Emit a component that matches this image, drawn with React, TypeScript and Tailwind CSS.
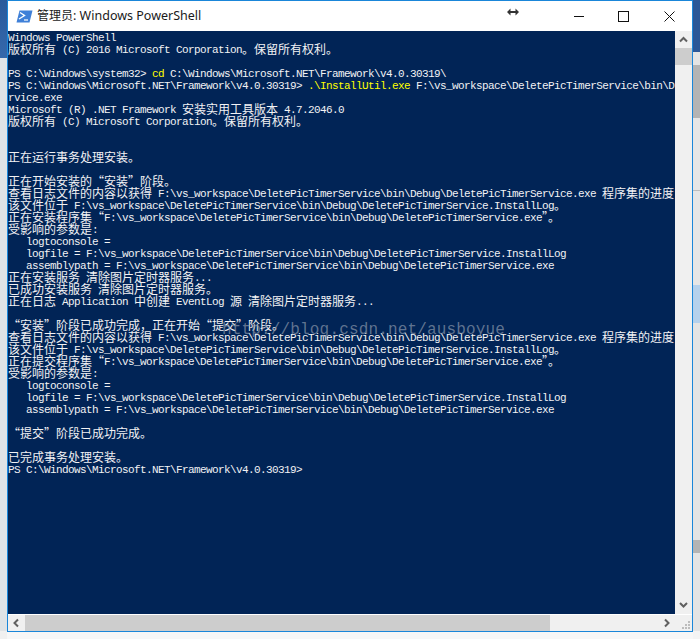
import React from "react";

const W = "F:\\vs_workspace\\DeletePicTimerService\\bin\\Debug\\DeletePicTimerService";
const FW = "PS C:\\Windows\\Microsoft.NET\\Framework\\v4.0.30319>";

const lines: string[] = [
  "Windows PowerShell",
  "版权所有 (C) 2016 Microsoft Corporation。保留所有权利。",
  "",
  "PS C:\\Windows\\system32> {cd} C:\\Windows\\Microsoft.NET\\Framework\\v4.0.30319\\",
  FW + " {.\\InstallUtil.exe} F:\\vs_workspace\\DeletePicTimerService\\bin\\D",
  "rvice.exe",
  "Microsoft (R) .NET Framework 安装实用工具版本 4.7.2046.0",
  "版权所有 (C) Microsoft Corporation。保留所有权利。",
  "",
  "",
  "正在运行事务处理安装。",
  "",
  "正在开始安装的“安装”阶段。",
  "查看日志文件的内容以获得 " + W + ".exe 程序集的进度",
  "该文件位于 " + W + ".InstallLog。",
  "正在安装程序集“" + W + ".exe”。",
  "受影响的参数是:",
  "   logtoconsole = ",
  "   logfile = " + W + ".InstallLog",
  "   assemblypath = " + W + ".exe",
  "正在安装服务 清除图片定时器服务...",
  "已成功安装服务 清除图片定时器服务。",
  "正在日志 Application 中创建 EventLog 源 清除图片定时器服务...",
  "",
  "“安装”阶段已成功完成，正在开始“提交”阶段。",
  "查看日志文件的内容以获得 " + W + ".exe 程序集的进度",
  "该文件位于 " + W + ".InstallLog。",
  "正在提交程序集“" + W + ".exe”。",
  "受影响的参数是:",
  "   logtoconsole = ",
  "   logfile = " + W + ".InstallLog",
  "   assemblypath = " + W + ".exe",
  "",
  "“提交”阶段已成功完成。",
  "",
  "已完成事务处理安装。",
  FW,
];

const LATIN = "font-['Liberation_Mono',monospace] text-[11px] tracking-[-0.6px] align-[1px]";

function Runs({ text, yellow }: { text: string; yellow?: boolean }) {
  const parts = text.split(/([\u3000-\u303f\u4e00-\u9fff\u201c\u201d\uff00-\uffef]+)/).filter(Boolean);
  return (
    <>
      {parts.map((p, i) =>
        /^[\u3000-\u303f\u4e00-\u9fff\u201c\u201d\uff00-\uffef]/.test(p) ? (
          <span key={i}>{p}</span>
        ) : (
          <span key={i} className={yellow ? LATIN + " text-[#ffff00]" : LATIN}>
            {p}
          </span>
        ),
      )}
    </>
  );
}

function Line({ text }: { text: string }) {
  const parts = text.split(/(\{[^}]*\})/).filter(Boolean);
  return (
    <div className="h-3 whitespace-pre font-['Noto_Sans_CJK_SC',sans-serif] text-[12px] leading-3">
      {parts.map((p, i) =>
        p.startsWith("{") ? <Runs key={i} text={p.slice(1, -1)} yellow /> : <Runs key={i} text={p} />,
      )}
    </div>
  );
}

function Chevron({ d }: { d: string }) {
  return (
    <svg width="17" height="17" viewBox="0 0 17 17" className="block">
      <path d={d} fill="none" stroke="#606060" strokeWidth="2" />
    </svg>
  );
}

export default function App() {
  return (
    <div className="flex h-[639px] w-[700px] overflow-hidden bg-[#f7f7f7]">
      {/* backdrop, left */}
      <div className="flex w-[7px] flex-col">
        <div className="h-[58px] bg-gradient-to-b from-[#2a5a9c] to-[#3568ab]" />
        <div className="h-[573px] bg-[#dfe3e6]" />
        <div className="flex-1 bg-[#f0f0f0]" />
      </div>

      {/* window */}
      <div className="flex h-[632px] w-[686px] flex-col border border-[#1a86d9] bg-[#f0f0f0]">
        <div className="flex h-[30px] items-center bg-white">
          <svg width="17" height="13" viewBox="0 0 17 13" className="ml-2 mt-[1px] shrink-0">
            <path d="M3.5 0.5H16.5L13.5 12.5H0.5Z" fill="#3f80d8" />
            <path d="M4 2.5L8.5 5.5L3 9" fill="none" stroke="#fff" strokeWidth="1.4" />
            <path d="M8 10H12" stroke="#fff" strokeWidth="1.2" />
          </svg>
          <div className="ml-[4px] w-[165px] shrink-0 whitespace-pre font-['Noto_Sans','Noto_Sans_CJK_SC',sans-serif] text-[12.5px] text-[#1a1a1a]">
            <span className="font-['Noto_Sans_CJK_SC',sans-serif] text-[12px]">管理员</span>: Windows PowerShell
          </div>
          <svg width="12" height="8" viewBox="0 0 12 8" className="ml-[305px] mb-[8px] shrink-0">
            <path d="M0 4L3.5 0.5V7.5ZM12 4L8.5 0.5V7.5Z" fill="#333" />
            <path d="M3 3H9V5H3Z" fill="#333" />
          </svg>
          <svg width="10" height="10" viewBox="0 0 10 10" className="ml-[55px] shrink-0">
            <path d="M0 5.5H10" stroke="#111" strokeWidth="1" />
          </svg>
          <svg width="11" height="11" viewBox="0 0 11 11" className="ml-[34px] shrink-0">
            <rect x="0.5" y="0.5" width="10" height="10" fill="none" stroke="#111" strokeWidth="1" />
          </svg>
          <svg width="11" height="11" viewBox="0 0 11 11" className="ml-[35px] shrink-0">
            <path d="M0.5 0.5L10.5 10.5M10.5 0.5L0.5 10.5" stroke="#111" strokeWidth="1" />
          </svg>
        </div>

        <div className="flex h-[583px]">
          <div className="relative w-[667px] overflow-hidden bg-[#012456] text-[#f2f2f4]">
            {lines.map((l, i) => (
              <Line key={i} text={l} />
            ))}
            <div className="absolute left-[214px] top-[287px] whitespace-pre font-['Liberation_Mono',monospace] text-[16px] tracking-[0.16px] text-[#8a97ab]/70">
              http://blog.csdn.net/ausboyue
            </div>
          </div>
          <div className="flex w-[17px] flex-col">
            <Chevron d="M5 10.5L8.5 7L12 10.5" />
            <div className="h-[17px] bg-[#cdcdcd]" />
            <div className="flex-1" />
            <Chevron d="M5 6L8.5 9.5L12 6" />
          </div>
        </div>

        <div className="flex h-[17px] border-t border-white">
          <div className="flex w-[667px]">
            <Chevron d="M10 4.5L6.5 8L10 11.5" />
            <div className="w-[525px] bg-[#cdcdcd]" />
            <div className="flex-1" />
            <Chevron d="M7 4.5L10.5 8L7 11.5" />
          </div>
          <svg width="17" height="16" viewBox="0 0 17 16" className="block">
            <path d="M13 6h2v2h-2zM10 9h2v2h-2zM13 9h2v2h-2zM7 12h2v2H7zM10 12h2v2h-2zM13 12h2v2h-2z" fill="#bcbcbc" />
          </svg>
        </div>
      </div>

      {/* backdrop, right */}
      <div className="flex w-[7px] flex-col">
        <div className="h-[52px] bg-[#2b5797]" />
        <div className="h-[13px] bg-[#e4e4e4]" />
        <div className="h-[53px] bg-[#b4b4b4]" />
        <div className="h-[72px] bg-[#e6e6e6]" />
        <div className="h-px bg-[#bdbdbd]" />
        <div className="h-[94px] bg-[#e6e6e6]" />
        <div className="h-[38px] bg-[#b5d1ec]" />
        <div className="h-[217px] bg-[#e4e4e4]" />
        <div className="h-[13px] bg-[#b4b4b4]" />
        <div className="h-[78px] bg-[#e4e4e4]" />
        <div className="flex-1 bg-[#f4f4f4]" />
      </div>
    </div>
  );
}
